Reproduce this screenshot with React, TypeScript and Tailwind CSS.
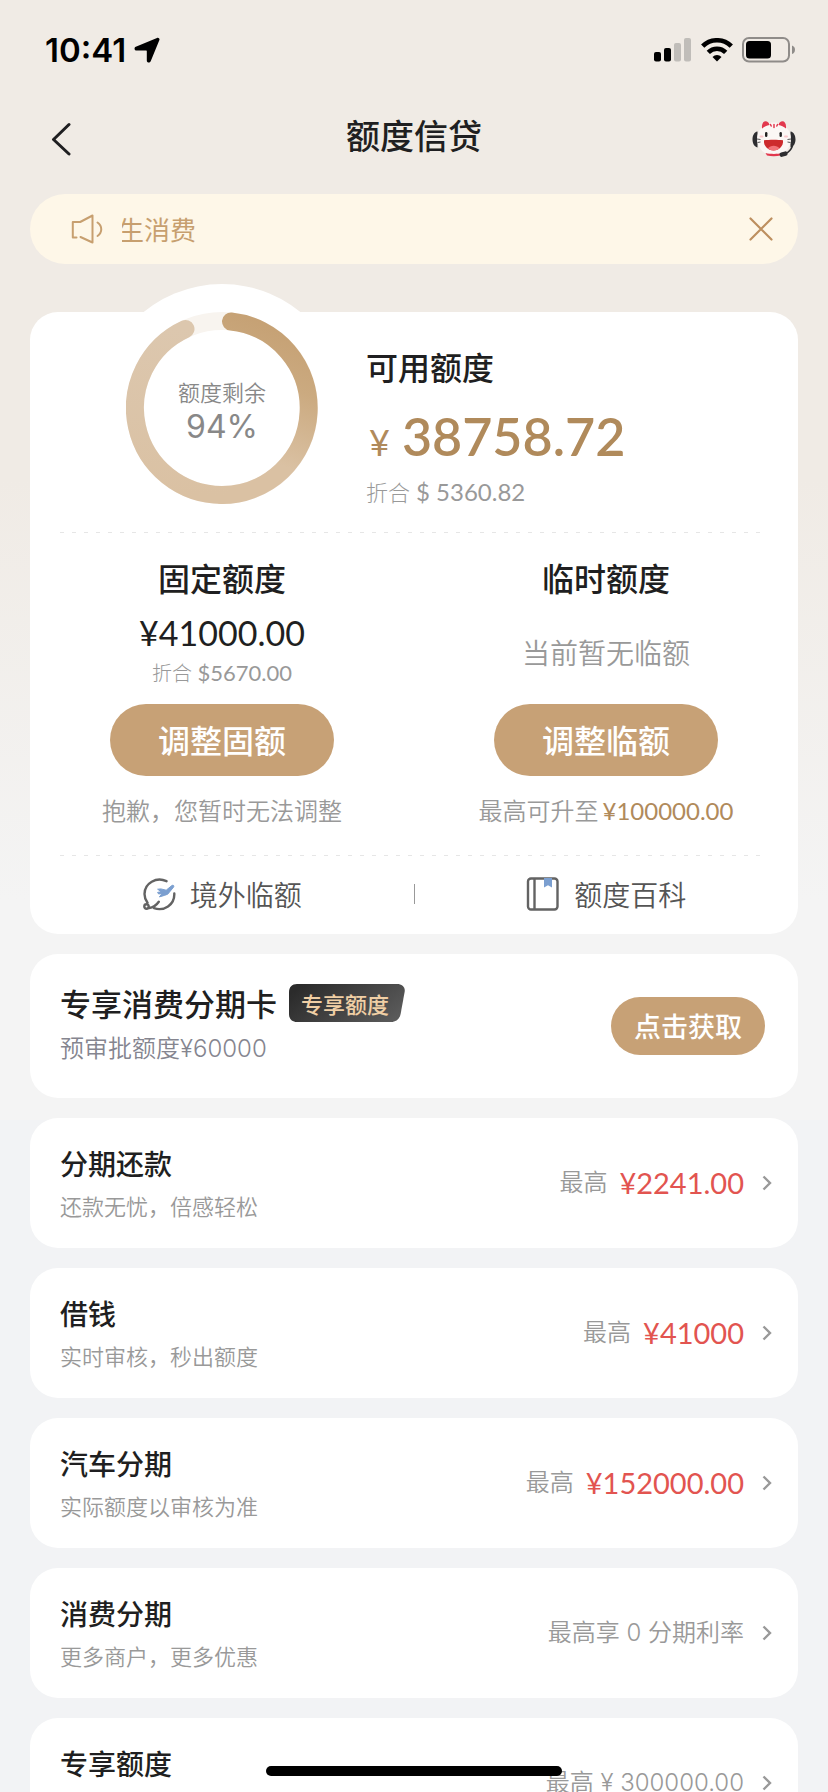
import React from 'react';

interface LoanItem {
  title: string;
  desc: string;
  label: string;
  amount?: string;
}

const LOAN_ITEMS: LoanItem[] = [
  { title: '分期还款', desc: '还款无忧，倍感轻松', label: '最高', amount: '¥2241.00' },
  { title: '借钱', desc: '实时审核，秒出额度', label: '最高', amount: '¥41000' },
  { title: '汽车分期', desc: '实际额度以审核为准', label: '最高', amount: '¥152000.00' },
  { title: '消费分期', desc: '更多商户，更多优惠', label: '最高享 0 分期利率' },
  { title: '专享额度', desc: '专属额度，按需使用', label: '最高 ¥ 300000.00' },
];

const StatusBar: React.FC = () => (
  <div className="flex items-center justify-between pl-[45px] pr-8 pt-7 h-[72px]">
    <div className="flex items-center gap-2">
      <span className="font-['Inter'] font-semibold text-[33px] leading-11 text-black">10:41</span>
      <svg width="26" height="26" viewBox="0 0 26 26" fill="#000">
        <path d="M23 .9 1.800 9.800c-2 .9-1.500 3.700.7 3.700h9.700c.4 0 .6.3.6.6v9.300c0 2.300 2.900 2.800 3.900.8L25.300 3.200C26 1.700 24.600.2 23 .9Z" />
      </svg>
    </div>
    <div className="flex items-center gap-[9px]">
      <svg width="38" height="24" viewBox="0 0 38 24">
        <rect x="0" y="14" width="7" height="9.500" rx="2" />
        <rect x="10" y="10" width="7" height="13.500" rx="2" />
        <rect x="20" y="5" width="7" height="18.500" rx="2" fill="#c0bdb9" />
        <rect x="30" y="0" width="7" height="23.500" rx="2" fill="#c0bdb9" />
      </svg>
      <svg width="32" height="24" viewBox="0 0 32 24" fill="none" stroke="#000" strokeWidth="4.600">
        <path d="M1.700 8.200a20.200 20.200 0 0 1 28.600 0" />
        <path d="M7.300 14.400a12.300 12.300 0 0 1 17.400 0" />
        <path d="M11.500 18.900a6.400 6.400 0 0 1 9 0L16 23.600Z" fill="#000" stroke="none" />
      </svg>
      <svg width="54" height="26" viewBox="0 0 54 26">
        <rect x="1" y="1" width="46" height="23.500" rx="6" fill="none" stroke="#8f8c89" strokeWidth="2" />
        <rect x="4" y="4" width="25" height="17.500" rx="3.500" />
        <path d="M50 8.500c1.800.6 3 2.300 3 4.300s-1.200 3.700-3 4.300Z" fill="#8f8c89" />
      </svg>
    </div>
  </div>
);

const Mascot: React.FC = () => (
  <svg width="44" height="38" viewBox="0 0 44 38">
    <path d="M5.500 11.500C2 12 .5 16 .5 19.500s1.500 7 5 8ZM38.500 11.500c3.500.5 5 4.500 5 8s-1.500 7-5 8Z" fill="#2d2d30" />
    <ellipse cx="22" cy="19" rx="17" ry="16.500" fill="#fbf7f5" />
    <path d="M10 8.500C9.500 3.500 11.500 1 14 1.300c2 .3 3 1.700 3.500 3.700-2.800.7-5.200 1.700-7.500 3.500ZM34 8.500c.5-5-1.500-7.500-4-7.200-2 .3-3 1.700-3.500 3.700 2.800.7 5.200 1.700 7.500 3.500Z" fill="#e2384e" />
    <path d="M18.500 4.500l.7 1.500M22 4.500v3M25.500 4.500l-.7 1.500" stroke="#e2384e" strokeWidth="1.500" strokeLinecap="round" />
    <rect x="13" y="12" width="2.400" height="5" rx="1.200" fill="#222" />
    <rect x="27.500" y="12" width="2.400" height="5" rx="1.200" fill="#222" />
    <path d="M5 19l3.500.5M5.500 22.500l3-.5M39 19l-3.500.5M38.500 22.500l-3-.5" stroke="#555" strokeWidth="1" />
    <path d="M8.500 16.500h2M33 16.500h2" stroke="#fac6ca" strokeWidth="2" strokeLinecap="round" />
    <path d="M12 20.300c5-.8 14-.8 19 0 .6 6-4 10.200-9.500 10.200S11.400 26.300 12 20.300Z" fill="#cd2b2e" />
    <path d="M16 28.300c2.300-3.500 9-3.500 11.500 0-3.300 2.900-8.500 2.900-11.500 0Z" fill="#f2737a" />
    <path d="M13.500 33c5 1.200 12 1.200 16.500 0l-1.500 2.500c-4 1-9.500 1-13.500 0Z" fill="#e2384e" />
    <path d="M40.500 26c-1.500 4-4 6.500-7.500 8" stroke="#2d2d30" strokeWidth="1.600" fill="none" />
    <rect x="27.500" y="32" width="8" height="4.500" rx="2" fill="#2d2d30" transform="rotate(-14 31 34)" />
  </svg>
);

const Header: React.FC = () => (
  <header className="flex items-center justify-between px-8 h-[134px]">
    <button aria-label="返回" className="w-11 pl-[18px]">
      <svg width="22" height="34" viewBox="0 0 22 34" fill="none" stroke="#1f1f21" strokeWidth="3" strokeLinecap="round" strokeLinejoin="round">
        <path d="M19 2.500 3.500 17.500 19 32" />
      </svg>
    </button>
    <h1 className="text-[34px] leading-11 font-medium text-[#1f1f21] pb-2">额度信贷</h1>
    <button aria-label="客服">
      <Mascot />
    </button>
  </header>
);

const Notice: React.FC = () => (
  <div className="flex items-center h-[70px] rounded-full bg-[#fef7e8] pl-10 pr-5">
    <svg width="34" height="32" viewBox="0 0 34 32" fill="none" stroke="#c79f6f" strokeWidth="2" strokeLinecap="round" strokeLinejoin="round" className="shrink-0">
      <path d="M6.500 24.500H2.800V9h7.400L22.500 2.500v27L10.500 24" />
      <path d="M27.500 9.500c5 3.500 5 10 0 13.500" />
    </svg>
    <div className="flex-1 overflow-hidden ml-[18px]">
      <p className="-ml-1 text-[26px] leading-9 text-[#c79f6f] whitespace-nowrap">生消费</p>
    </div>
    <button aria-label="关闭" className="p-1">
      <svg width="26" height="26" viewBox="0 0 26 26" fill="none" stroke="#bd8f5f" strokeWidth="2.200" strokeLinecap="round">
        <path d="M2.500 2.500l21 21M23.500 2.500l-21 21" />
      </svg>
    </button>
  </div>
);

const QuotaRing: React.FC = () => (
  <div className="relative size-48 shrink-0">
    <svg viewBox="0 0 192 192" className="size-full">
      <defs>
        <linearGradient id="ringRight" x1="0.7" y1="0" x2="0.5" y2="1">
          <stop offset="0" stopColor="#c5a073" />
          <stop offset="0.35" stopColor="#cbaa80" />
          <stop offset="0.8" stopColor="#dac1a3" />
        </linearGradient>
        <linearGradient id="ringLeft" x1="0" y1="0" x2="0" y2="1">
          <stop offset="0" stopColor="#dcc7ae" />
          <stop offset="1" stopColor="#dac1a3" />
        </linearGradient>
      </defs>
      <circle cx="96" cy="96" r="87" fill="none" stroke="#f8f4ef" strokeWidth="18" />
      <path d="M105 9.500A87 87 0 0 1 96 183" fill="none" stroke="url(#ringRight)" strokeWidth="18" strokeLinecap="round" />
      <path d="M96 183A87 87 0 0 1 59.500 17" fill="none" stroke="url(#ringLeft)" strokeWidth="18" strokeLinecap="round" />
    </svg>
    <div className="absolute inset-0 flex flex-col items-center justify-center pt-1.5 text-[#888]">
      <span className="text-[22px] leading-8 font-[350]">额度剩余</span>
      <span className="font-['Inter'] text-[32px] leading-10">94%</span>
    </div>
  </div>
);

const Divider: React.FC = () => (
  <div className="mx-[30px] h-px bg-[repeating-linear-gradient(90deg,#e6e6e6_0_4px,transparent_4px_12px)]" />
);

const PlaneIcon: React.FC = () => (
  <svg width="34" height="34" viewBox="0 0 34 34" fill="none" stroke="#636363" strokeWidth="2.400" strokeLinecap="round">
    <path d="M24.500 4.200C14.500-.5 2.500 6 2.500 17c0 3.500 1 6 3 8.800" />
    <path d="M32.300 16.500c.5 11.500-10.500 18-20.300 14.700" />
    <circle cx="4.500" cy="29.500" r="2.200" />
    <path d="M7 31c4-.5 7.500-3 9.800-6.300" />
    <path d="M16 12.200l2.800-.3 5.400 1.300 5.600-4.600c1.500-1 2.700.2 1.700 1.600l-5.800 7-3.300 1.200-5 1.500 2.600-3.200-3.500.2-.9-1.500 3.300-.6Z" fill="#7b9fd0" stroke="#7b9fd0" strokeWidth="1" strokeLinejoin="round" />
  </svg>
);

const BookIcon: React.FC = () => (
  <svg width="34" height="34" viewBox="0 0 34 34" fill="none" stroke="#636363" strokeWidth="2.400">
    <rect x="2" y="1.500" width="29.500" height="31" rx="3" />
    <path d="M8.500 2v30" />
    <path d="M18 1h8v9.500l-4-2.200-4 2.200Z" fill="#7b9fd0" stroke="none" />
  </svg>
);

const QuotaCard: React.FC = () => (
  <section className="relative mt-12 rounded-[28px] bg-white">
    <div className="absolute -top-7 left-[68px] size-[248px] rounded-full bg-white" />
    <div className="relative flex gap-12 pl-24 pb-6">
      <QuotaRing />
      <div className="pt-8">
        <h2 className="text-[32px] leading-11 font-medium text-[#1f1f21]">可用额度</h2>
        <p className="mt-4 h-16 pl-[3px] flex items-baseline gap-3 text-[#b08a5b] font-['Lato'] leading-16">
          <span className="text-[36px]">¥</span>
          <span className="text-[52px] font-semibold">38758.72</span>
        </p>
        <p className="mt-2 h-8 text-[22px] leading-8 font-light text-[#999] font-['Lato','Noto_Sans_CJK_SC',sans-serif]">
          折合 <span className="text-[24px] font-normal">$ 5360.82</span>
        </p>
      </div>
    </div>
    <Divider />
    <div className="relative grid grid-cols-2 text-center pt-[22px] pb-7">
      <div className="flex flex-col items-center">
        <h2 className="text-[32px] leading-11 font-medium text-[#1f1f21]">固定额度</h2>
        <div className="h-[105px] pt-3">
          <p className="text-[34px] leading-11 text-[#1f1f21] font-['Lato']">¥41000.00</p>
          <p className="text-[20px] leading-9 font-light text-[#999] font-['Lato','Noto_Sans_CJK_SC',sans-serif]">
            折合 <span className="text-[22px] font-normal">$5670.00</span>
          </p>
        </div>
        <button className="w-56 h-18 rounded-full bg-[#c7a176] text-[32px] font-medium text-white pb-0.5">调整固额</button>
        <p className="mt-[18px] text-[24px] leading-8 font-[350] text-[#999]">抱歉，您暂时无法调整</p>
      </div>
      <div className="flex flex-col items-center">
        <h2 className="text-[32px] leading-11 font-medium text-[#1f1f21]">临时额度</h2>
        <p className="h-[105px] flex items-center text-[28px] font-[350] text-[#999]">当前暂无临额</p>
        <button className="w-56 h-18 rounded-full bg-[#c7a176] text-[32px] font-medium text-white pb-0.5">调整临额</button>
        <p className="mt-[18px] flex items-baseline gap-1 text-[24px] leading-8 font-[350] text-[#999]">
          最高可升至<span className="font-['Lato'] font-normal text-[#b08a5b]">¥100000.00</span>
        </p>
      </div>
    </div>
    <Divider />
    <div className="flex items-center h-[78px] pb-0.5 text-[28px] font-[350] text-[#555]">
      <button className="flex-1 flex items-center justify-center gap-3.5">
        <PlaneIcon />
        境外临额
      </button>
      <span className="w-px h-5 bg-[#999]" />
      <button className="flex-1 flex items-center justify-center gap-3.5">
        <BookIcon />
        额度百科
      </button>
    </div>
  </section>
);

const InstallmentCard: React.FC = () => (
  <section className="flex items-center justify-between h-36 rounded-[28px] bg-white pl-[30px] pr-[33px]">
    <div>
      <div className="flex items-center gap-3">
        <h2 className="text-[31px] leading-11 font-medium text-[#1f1f21]">专享消费分期卡</h2>
        <span className="relative flex items-center h-[38px] pl-3 pr-4 text-[22px] font-medium text-[#f0cfa5]">
          <svg viewBox="0 0 116 38" preserveAspectRatio="none" className="absolute inset-0 size-full">
            <defs>
              <linearGradient id="tag" x1="0" y1="0.3" x2="1" y2="0.7">
                <stop offset="0" stopColor="#2b2b2b" />
                <stop offset="1" stopColor="#5a5a5a" />
              </linearGradient>
            </defs>
            <path d="M8 0h100c5 0 8.500 3 7.600 8l-4 22c-1 5-4.600 8-9.600 8H8c-5 0-8-3-8-8V8c0-5 3-8 8-8Z" fill="url(#tag)" />
          </svg>
          <span className="relative">专享额度</span>
        </span>
      </div>
      <p className="text-[24px] leading-11 font-[350] text-[#85858f]">
        预审批额度<span className="font-['Inter'] font-light">¥60000</span>
      </p>
    </div>
    <button className="w-[154px] h-[58px] rounded-full bg-[#c7a176] text-[27px] font-medium text-white">点击获取</button>
  </section>
);

const LoanRow: React.FC<{ item: LoanItem }> = ({ item }) => (
  <a href="#" className="flex items-center justify-between h-[130px] shrink-0 rounded-[28px] bg-white pl-[30px] pr-[26px]">
    <div className="pt-1">
      <h3 className="text-[28px] leading-10 font-medium text-[#1f1f21]">{item.title}</h3>
      <p className="text-[22px] leading-11 font-[350] text-[#999]">{item.desc}</p>
    </div>
    <div className="flex items-center">
      <span className="text-[24px] font-[350] text-[#999] font-['Inter','Noto_Sans_CJK_SC',sans-serif]">{item.label}</span>
      {item.amount && <span className="ml-3 text-[29px] text-[#e25450] font-['Lato']">{item.amount}</span>}
      <svg width="10" height="16" viewBox="0 0 10 16" fill="none" stroke="#999" strokeWidth="2.400" className="ml-[18px]">
        <path d="M1.500 1.500 8 8l-6.500 6.500" />
      </svg>
    </div>
  </a>
);

export default function App() {
  return (
    <div className="h-screen flex flex-col overflow-hidden font-['Noto_Sans_CJK_SC',sans-serif] bg-[linear-gradient(#f0ebe5_480px,#f4f4f4_900px,#f4f4f4_1120px,#f2f3f5_1120px)]">
      <StatusBar />
      <Header />
      <main className="flex-1 min-h-0 overflow-y-auto [scrollbar-width:none] px-[30px] -mt-3">
        <Notice />
        <QuotaCard />
        <div className="flex flex-col gap-5 mt-5">
          <InstallmentCard />
          {LOAN_ITEMS.map((item) => (
            <LoanRow key={item.title} item={item} />
          ))}
        </div>
      </main>
      <div className="fixed bottom-4 left-1/2 -translate-x-1/2 w-[296px] h-2.5 rounded-full bg-black" />
    </div>
  );
}
